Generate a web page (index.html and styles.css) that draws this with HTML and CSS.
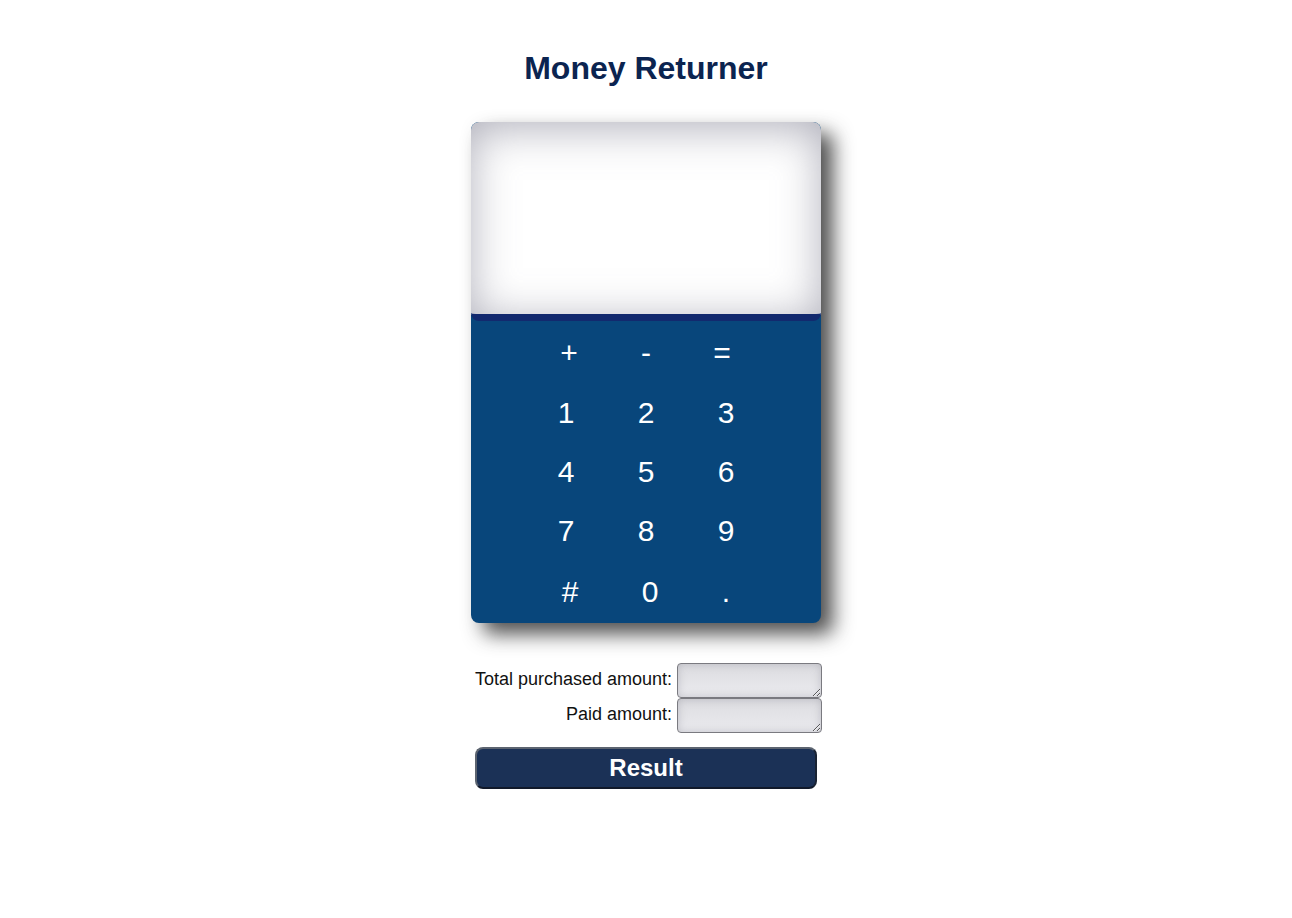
FILE: index.html
```html
<!DOCTYPE html>
<html lang="en">
<head>
<meta charset="utf-8">
<title>Money Returner</title>
<link rel="stylesheet" href="styles.css">
</head>
<body>
<main class="page">
  <h1 class="title">Money Returner</h1>
  <section class="calc">
    <div class="display"></div>
    <div class="keypad">
      <span class="key op-plus">+</span>
      <span class="key">-</span>
      <span class="key op-eq">=</span>
      <span class="key">1</span>
      <span class="key">2</span>
      <span class="key">3</span>
      <span class="key">4</span>
      <span class="key">5</span>
      <span class="key">6</span>
      <span class="key">7</span>
      <span class="key">8</span>
      <span class="key">9</span>
      <span class="key last shift">#</span>
      <span class="key last shift">0</span>
      <span class="key last">.</span>
    </div>
  </section>
  <form class="form">
    <label class="label" for="total">Total purchased amount:</label>
    <textarea class="field" id="total"></textarea>
    <label class="label" for="paid">Paid amount:</label>
    <textarea class="field" id="paid"></textarea>
  </form>
  <button class="result" type="button">Result</button>
</main>
</body>
</html>
```

FILE: styles.css
```css
html, body {
  margin: 0;
  padding: 0;
  background: #ffffff;
}

body {
  font-family: "Liberation Sans", Arial, sans-serif;
}

.page {
  display: flex;
  flex-direction: column;
  align-items: center;
  padding-top: 50px;
}

.title {
  margin: 0;
  font-size: 32px;
  line-height: 37px;
  font-weight: bold;
  color: #0b2450;
}

.calc {
  margin-top: 35px;
  width: 350px;
  border-radius: 8px;
  background: #08467b;
  box-shadow: 12px 11px 20px rgba(35, 35, 35, 0.8);
  overflow: hidden;
}

.display {
  height: 192px;
  background: #ffffff;
  border-radius: 8px;
  border-bottom: 7px solid #12296e;
  box-shadow: inset 0 6px 44px rgba(110, 110, 130, 0.55);
}

.keypad {
  display: grid;
  grid-template-columns: repeat(3, 80px);
  grid-auto-rows: 59px;
  justify-content: center;
  padding: 2px 0 5px;
}

.key {
  display: flex;
  align-items: center;
  justify-content: center;
  color: #ffffff;
  font-size: 30px;
  line-height: 1;
  padding-top: 2px;
}

.op-plus {
  padding-left: 6px;
  padding-top: 0;
}

.op-eq {
  padding-right: 8px;
  padding-top: 0;
}

.key:nth-child(2) {
  padding-top: 0;
}

.last {
  padding-top: 6px;
}

.shift {
  padding-left: 8px;
}

.form {
  margin-top: 40px;
  margin-left: 5px;
  display: grid;
  grid-template-columns: auto 145px;
  column-gap: 5px;
  align-items: center;
}

.label {
  text-align: right;
  font-size: 18px;
  color: #111111;
  padding-bottom: 2px;
}

.field {
  display: block;
  box-sizing: border-box;
  width: 145px;
  height: 35px;
  margin: 0;
  border: 1px solid #7a7a80;
  border-radius: 4px;
  background: linear-gradient(#dcdce0, #ebebef);
  box-shadow: inset 0 0 8px rgba(120, 120, 135, 0.35);
  resize: both;
}

.result {
  margin-top: 14px;
  width: 342px;
  height: 42px;
  box-sizing: border-box;
  border: 2px solid #5c6470;
  border-bottom-color: #11192a;
  border-right-color: #1a2333;
  border-radius: 8px;
  background: #1b3156;
  color: #ffffff;
  font-family: "Liberation Sans", Arial, sans-serif;
  font-size: 24px;
  font-weight: bold;
  padding: 0;
}
```
